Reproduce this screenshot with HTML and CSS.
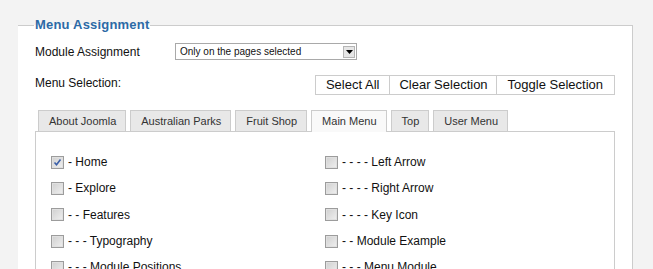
FILE: index.html
```html
<!DOCTYPE html>
<html>
<head>
<meta charset="utf-8">
<link rel="stylesheet" href="styles.css">
</head>
<body>
<fieldset class="box">
  <legend class="box-title">Menu Assignment</legend>
  <div class="row row-assign">
    <label class="lbl">Module Assignment</label>
    <div class="select">
      <span class="select-text">Only on the pages selected</span>
      <span class="select-btn"><svg width="7" height="4" viewBox="0 0 7 4"><path d="M0 0h7L3.5 4z" fill="#000"/></svg></span>
    </div>
  </div>
  <div class="row row-sel">
    <span class="lbl lbl-sel">Menu Selection:</span>
    <div class="btns">
      <button class="btn btn-all">Select All</button>
      <button class="btn btn-clear">Clear Selection</button>
      <button class="btn btn-toggle">Toggle Selection</button>
    </div>
  </div>
  <ul class="tabs">
    <li class="tab">About Joomla</li>
    <li class="tab">Australian Parks</li>
    <li class="tab">Fruit Shop</li>
    <li class="tab tab-active">Main Menu</li>
    <li class="tab">Top</li>
    <li class="tab">User Menu</li>
  </ul>
  <div class="panel">
    <ul class="col">
      <li class="item"><span class="cb cb-on"><svg width="9" height="9" viewBox="0 0 9 9"><path d="M1.5 4.5l2 2.2L7.5 1.5" fill="none" stroke="#3b5fa8" stroke-width="1.6"/></svg></span>- Home</li>
      <li class="item"><span class="cb"></span>- Explore</li>
      <li class="item"><span class="cb"></span>- - Features</li>
      <li class="item"><span class="cb"></span>- - - Typography</li>
      <li class="item"><span class="cb"></span>- - - Module Positions</li>
    </ul>
    <ul class="col">
      <li class="item"><span class="cb"></span>- - - - Left Arrow</li>
      <li class="item"><span class="cb"></span>- - - - Right Arrow</li>
      <li class="item"><span class="cb"></span>- - - - Key Icon</li>
      <li class="item"><span class="cb"></span>- - Module Example</li>
      <li class="item"><span class="cb"></span>- - - Menu Module</li>
    </ul>
  </div>
</fieldset>
</body>
</html>
```

FILE: styles.css
```css
html, body {
  margin: 0;
  padding: 0;
  background: #f3f3f3;
  font-family: "Liberation Sans", Arial, sans-serif;
  color: #111;
  overflow: hidden;
  height: 269px;
}

.box {
  margin: 17px 0 0 18px;
  width: 580px;
  padding: 0 17px 20px 17px;
  border: 1px solid #cccccc;
  border-left: none;
  background: #fff;
  min-width: 0;
}

.box-title {
  font-size: 13px;
  font-weight: bold;
  letter-spacing: 0.2px;
  color: #2c6aa6;
  line-height: 16px;
  padding: 0 1px;
  margin-left: -1px;
}

.row {
  display: flex;
}

.row-assign {
  margin-top: 10px;
  align-items: center;
  height: 17px;
}

.lbl {
  font-size: 12px;
  width: 140px;
  flex: none;
}

.select {
  width: 180px;
  height: 15px;
  border: 1px solid #a9a9a9;
  display: flex;
  align-items: center;
  background: #fff;
}

.select-text {
  font-size: 10px;
  padding-left: 4px;
  flex: 1;
}

.select-btn {
  width: 12px;
  height: 12px;
  margin-right: 1px;
  border: 1px solid #b5b5b5;
  background: #e6e6e6;
  display: flex;
  align-items: center;
  justify-content: center;
  box-sizing: border-box;
}

.row-sel {
  margin-top: 15px;
  height: 20px;
  align-items: flex-start;
}

.lbl-sel {
  padding-top: 1px;
}

.btns {
  margin-left: auto;
  display: flex;
}

.btn {
  font-family: "Liberation Sans", Arial, sans-serif;
  font-size: 13px;
  color: #111;
  background: #fff;
  border: 1px solid #cccccc;
  height: 20px;
  margin: 0 0 0 -1px;
  line-height: 18px;
}

.btn-all {
  padding: 0 10px;
}

.btn-clear {
  padding: 0 8px 0 9px;
}

.btn-toggle {
  padding: 0 11px;
}

.tabs {
  list-style: none;
  margin: 15px 0 0 0;
  padding: 0 0 0 3px;
  display: flex;
  gap: 4px;
  position: relative;
  z-index: 1;
}

.tab {
  font-size: 11px;
  color: #333;
  height: 21px;
  box-sizing: border-box;
  line-height: 20px;
  padding: 0 9px 0 10px;
  border: 1px solid #cccccc;
  border-bottom: none;
  background: #e8e8e8;
}

.tab-active {
  background: #f9f9f9;
  height: 22px;
  margin-bottom: -1px;
}

.panel {
  border: 1px solid #cccccc;
  display: flex;
  padding: 17px 0 0 15px;
  min-height: 200px;
}

.col {
  list-style: none;
  margin: 0;
  padding: 0;
  width: 274px;
}

.item {
  display: flex;
  align-items: center;
  height: 26.33px;
  font-size: 12px;
}

.cb {
  width: 13px;
  height: 13px;
  box-sizing: border-box;
  border: 1px solid #9c9c9c;
  background: linear-gradient(135deg, #cfcfcf 0%, #f0f0f0 100%);
  box-shadow: inset 0 0 0 1px #e0e0e0;
  margin-right: 4px;
  display: flex;
  align-items: center;
  justify-content: center;
  flex: none;
}
```
